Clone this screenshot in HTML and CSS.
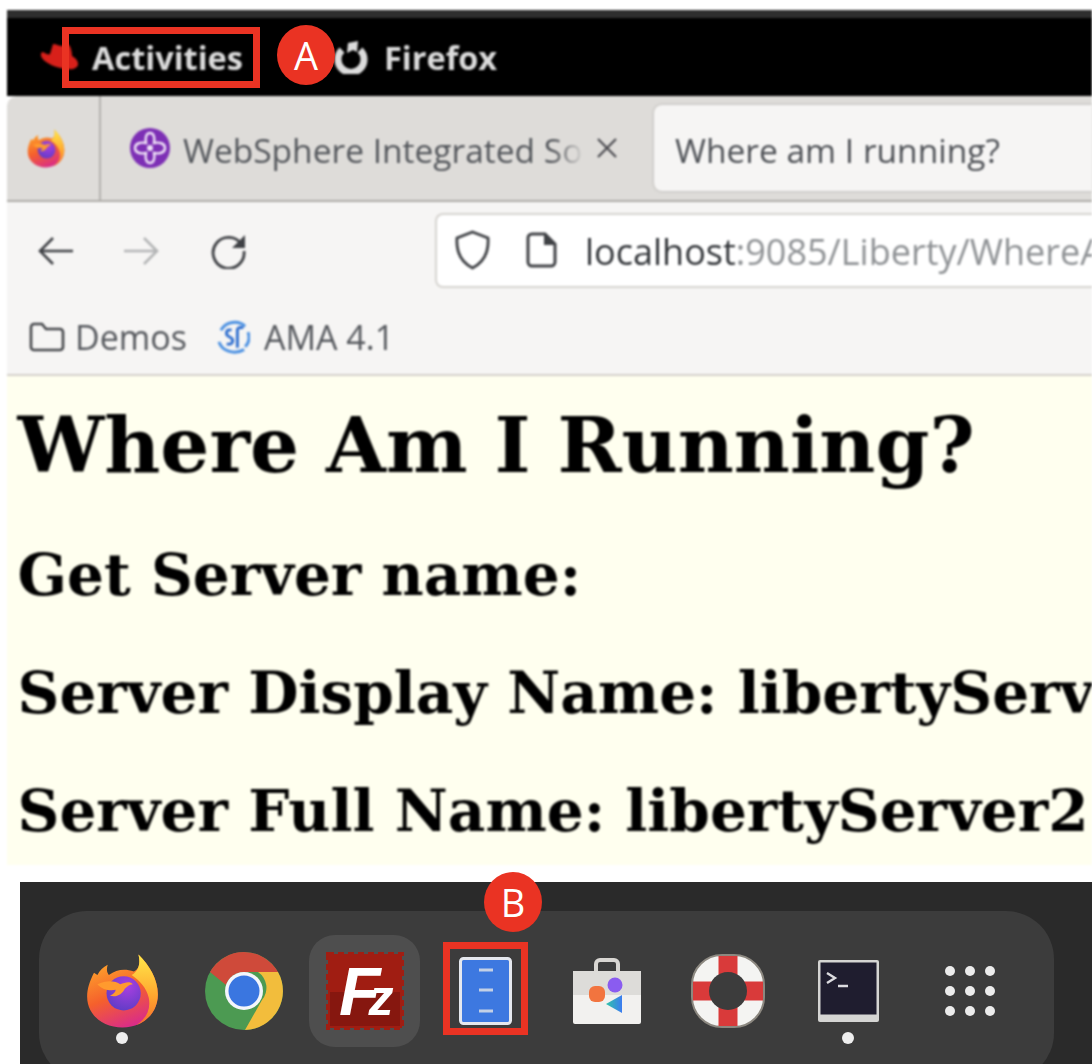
FILE: index.html
```html
<!DOCTYPE html>
<html lang="en">
<head>
    <meta charset="UTF-8">
    <title>Where am I running?</title>
    <link rel="stylesheet" href="styles.css">
</head>
<body>
    <svg class="defs" width="0" height="0">
        <defs>
            <linearGradient id="fx-body" x1="0.2" y1="0" x2="0.6" y2="1">
                <stop offset="0" stop-color="#ffb12b"/>
                <stop offset="0.55" stop-color="#f5602c"/>
                <stop offset="1" stop-color="#d92b8a"/>
            </linearGradient>
            <linearGradient id="fx-flame" x1="0.5" y1="0" x2="0.5" y2="1">
                <stop offset="0" stop-color="#ffe94a"/>
                <stop offset="0.6" stop-color="#ffa42e"/>
                <stop offset="1" stop-color="#f4702c"/>
            </linearGradient>
            <radialGradient id="fx-globe" cx="0.6" cy="0.3" r="0.8">
                <stop offset="0" stop-color="#a93fe0"/>
                <stop offset="1" stop-color="#5a3cc4"/>
            </radialGradient>
            <linearGradient id="store-tri" x1="0" y1="0" x2="1" y2="0">
                <stop offset="0" stop-color="#2fc4a8"/>
                <stop offset="1" stop-color="#3c7cf0"/>
            </linearGradient>
            <symbol id="firefox" viewBox="0 0 64 66">
                <path fill="url(#fx-body)" d="M7 17C3 25 1 31 1 38c0 16 14 27 31 27s31-12 31-29C63 24 57 12 46 1c2 9 0 13-4 15-8-3-15-2-22 3-2-3-2-5-1-9-4 2-7 5-9 9z"/>
                <path fill="url(#fx-flame)" d="M46 1c9 9 17 21 17 35 0 13-8 23-19 27 9-6 13-14 11-24-2-9-8-15-15-20 6-3 8-10 6-18z"/>
                <circle cx="33" cy="35" r="15" fill="url(#fx-globe)"/>
                <path fill="#ff9a2e" d="M10 27c8-4 16-3 20 0 4-1 8-3 11 0-3 0-5 2-7 4-2 5-8 8-13 6 3-1 5-3 5-5-5 1-12 0-16-5z"/>
            </symbol>
        </defs>
    </svg>

    <div class="screen">
        <div class="window">
            <div class="topbar">
                <svg class="hat" viewBox="0 0 38 28">
                    <path fill="#d8201a" d="M13 1c3 0 6 2 9 2 3 0 5-2 7-1 2 2 3 8 3 11 4 2 6 5 6 8 0 4-5 6-11 5C17 25 6 21 2 15c-2-3-1-6 1-6 3 2 6 3 7 2z"/>
                </svg>
                <span class="topbar-label topbar-activities">Activities</span>
                <svg class="app-icon" viewBox="0 0 34 34">
                    <path fill="none" stroke="#dcdcdc" stroke-width="7" d="M8 10a13 13 0 1 0 18 0"/>
                    <path fill="#dcdcdc" d="M14 3l10-2-1 11-4-2-6 3z"/>
                </svg>
                <span class="topbar-label">Firefox</span>
            </div>

            <div class="tabs">
                <div class="tab-pinned">
                    <svg class="tab-firefox"><use href="#firefox"/></svg>
                </div>
                <div class="tab">
                    <svg class="tab-favicon" viewBox="0 0 40 40">
                        <circle cx="20" cy="20" r="20" fill="#7d2fb5"/>
                        <path fill="none" stroke="#efe3f7" stroke-width="2.4" d="M20 5c4 0 5 5 4 10 5-1 11 0 11 5s-6 6-11 5c1 5 0 10-4 10s-5-5-4-10c-5 1-11 0-11-5s6-6 11-5c-1-5 0-10 4-10z"/>
                        <circle cx="20" cy="20" r="3" fill="#efe3f7"/>
                    </svg>
                    <span class="tab-title">WebSphere Integrated So</span>
                    <svg class="tab-close" viewBox="0 0 22 22">
                        <path stroke="#4a4a4f" stroke-width="2.2" d="M2 2l18 18M20 2L2 20"/>
                    </svg>
                </div>
                <div class="tab-active">Where am I running?</div>
            </div>

            <div class="toolbar">
                <svg class="nav-icon" viewBox="0 0 36 32">
                    <path fill="none" stroke="#3f4145" stroke-width="2.6" d="M36 16H3M16 3L3 16l13 13"/>
                </svg>
                <svg class="nav-icon" viewBox="0 0 36 32">
                    <path fill="none" stroke="#b4b5b6" stroke-width="2.6" d="M0 16h33M20 3l13 13-13 13"/>
                </svg>
                <svg class="nav-icon" viewBox="0 0 36 36">
                    <path fill="none" stroke="#3f4145" stroke-width="2.8" d="M31 12a15.500 15.500 0 1 0 2 6"/>
                    <path fill="#3f4145" d="M34 2v13H21z"/>
                </svg>
                <div class="urlbar">
                    <svg class="url-shield" viewBox="0 0 37 40">
                        <path fill="none" stroke="#3f4145" stroke-width="2.8" d="M18.500 2L34 8c1 14-4 24-15.500 30C7 32 2 22 3 8z"/>
                    </svg>
                    <svg class="url-page" viewBox="0 0 31 36">
                        <path fill="none" stroke="#3f4145" stroke-width="3" d="M2 6a4 4 0 0 1 4-4h13l10 10v18a4 4 0 0 1-4 4H6a4 4 0 0 1-4-4z"/>
                        <path fill="#3f4145" d="M18 2l11 11H18z"/>
                    </svg>
                    <span class="url-text"><span class="url-host">localhost</span><span class="url-rest">:9085/Liberty/WhereAmI</span></span>
                </div>
            </div>

            <div class="bookmarks">
                <svg class="bm-folder" viewBox="0 0 36 32">
                    <path fill="none" stroke="#45474b" stroke-width="2.6" d="M2 6a3 3 0 0 1 3-3h8l4 5h14a3 3 0 0 1 3 3v15a3 3 0 0 1-3 3H5a3 3 0 0 1-3-3z"/>
                </svg>
                <span class="bm-label">Demos</span>
                <svg class="bm-favicon" viewBox="0 0 34 38">
                    <path fill="none" stroke="#4a90e2" stroke-width="3" d="M4 12C9 3 22 1 29 8M2 24c3 9 15 14 26 8M32 14c2 6 1 11-3 15"/>
                    <path fill="none" stroke="#2f6fd0" stroke-width="3" d="M15 12c-6-2-7 5-2 7s4 9-3 7M21 10v20M21 10c3-1 5-1 6 0"/>
                </svg>
                <span class="bm-label">AMA 4.1</span>
            </div>

            <div class="content">
                <h1>Where Am I Running?</h1>
                <h2>Get Server name:</h2>
                <h2>Server Display Name: libertyServer2</h2>
                <h2>Server Full Name: libertyServer2</h2>
            </div>
        </div>

        <div class="dock-wrap">
            <div class="dock">
                <div class="dock-item">
                    <svg class="dock-firefox"><use href="#firefox"/></svg>
                    <span class="dock-dot"></span>
                </div>
                <div class="dock-item">
                    <svg class="dock-chrome" viewBox="0 0 78 78">
                        <circle cx="39" cy="39" r="39" fill="#4c9a52"/>
                        <path fill="#cf4a3a" d="M39 0a39 39 0 0 1 34 20H39a19 19 0 0 0-18 13L5 20A39 39 0 0 1 39 0z"/>
                        <path fill="#f2bd3c" d="M73 20a39 39 0 0 1-33 58l17-30a19 19 0 0 0-4-28z"/>
                        <circle cx="39" cy="39" r="19" fill="#f4f6fb"/>
                        <circle cx="39" cy="39" r="15.500" fill="#3a76e0"/>
                    </svg>
                </div>
                <div class="dock-item dock-item-hover">
                    <svg class="dock-fz" viewBox="0 0 78 78">
                        <rect x="2" y="2" width="74" height="74" fill="#a01d12" stroke="#a01d12" stroke-width="4" stroke-dasharray="6 4"/>
                        <rect x="4" y="40" width="70" height="34" fill="#86170f"/>
                        <text class="fz-text" x="13" y="63">F<tspan class="fz-small" dx="-12">z</tspan></text>
                    </svg>
                </div>
                <div class="dock-item">
                    <svg class="dock-files" viewBox="0 0 53 68">
                        <rect x="1.500" y="1.500" width="50" height="65" rx="3" fill="#3d78e0" stroke="#e6e8ee" stroke-width="3"/>
                        <path stroke="#c3d0e6" stroke-width="3" d="M20 13h14M20 33h14M20 54h14"/>
                    </svg>
                </div>
                <div class="dock-item">
                    <svg class="dock-store" viewBox="0 0 68 66">
                        <path fill="none" stroke="#d8d6d2" stroke-width="4" d="M23 14V6a4 4 0 0 1 4-4h14a4 4 0 0 1 4 4v8"/>
                        <rect y="13" width="68" height="53" rx="2" fill="#f2f1ef"/>
                        <rect y="13" width="68" height="24" fill="#dddcd9"/>
                        <circle cx="42" cy="27" r="7.500" fill="#8a5cf0"/>
                        <rect x="16" y="28" width="16" height="16" rx="6" fill="#f2743f"/>
                        <path fill="url(#store-tri)" d="M33 46l16-9v18z"/>
                    </svg>
                </div>
                <div class="dock-item">
                    <svg class="dock-help" viewBox="0 0 74 74">
                        <rect x="1" y="1" width="72" height="72" rx="30" fill="#f4f4f2" stroke="#8c8880" stroke-width="2"/>
                        <path fill="#d93a3a" d="M27.500 2h19v70h-19zM2 27.500h70v19H2z"/>
                        <circle cx="37" cy="37" r="19" fill="#3c3c3c"/>
                    </svg>
                </div>
                <div class="dock-item">
                    <svg class="dock-term" viewBox="0 0 63 64">
                        <rect x="1" y="1" width="61" height="62" rx="2" fill="#d5d5d3"/>
                        <rect x="3.500" y="3.500" width="56" height="52" fill="#1f1d2f"/>
                        <path fill="none" stroke="#dcdce0" stroke-width="2.400" d="M10 14l8 5-8 5M21 27h10"/>
                    </svg>
                    <span class="dock-dot"></span>
                </div>
                <div class="dock-item">
                    <svg class="dock-grid" viewBox="0 0 50 50">
                        <g fill="#ececec">
                            <circle cx="5" cy="5" r="5"/><circle cx="25" cy="5" r="5"/><circle cx="45" cy="5" r="5"/>
                            <circle cx="5" cy="25" r="5"/><circle cx="25" cy="25" r="5"/><circle cx="45" cy="25" r="5"/>
                            <circle cx="5" cy="45" r="5"/><circle cx="25" cy="45" r="5"/><circle cx="45" cy="45" r="5"/>
                        </g>
                    </svg>
                </div>
            </div>
        </div>

        <!-- callouts drawn over the screenshot -->
        <div class="callout-box callout-box-a"></div>
        <div class="callout-dot callout-dot-a">A</div>
        <div class="callout-box callout-box-b"></div>
        <div class="callout-dot callout-dot-b">B</div>
    </div>
</body>
</html>
```

FILE: styles.css
```css
html, body {
    margin: 0;
    padding: 0;
    background: #fff;
}

.defs {
    position: absolute;
}

.screen {
    position: relative;
    width: 1092px;
    height: 1064px;
    overflow: hidden;
    padding-top: 10px;
    box-sizing: border-box;
    font-family: "Open Sans", sans-serif;
}

.window {
    margin-left: 7px;
    filter: blur(0.8px);
}

/* gnome top bar */
.topbar {
    height: 78px;
    background: #000;
    border-top: 8px solid #2e2e2e;
    display: flex;
    align-items: center;
}

.hat {
    width: 38px;
    height: 28px;
    margin-left: 33px;
}

.topbar-label {
    color: #dcdcdc;
    font-size: 32.5px;
    font-weight: 700;
}

.topbar-activities {
    margin-left: 14px;
}

.app-icon {
    width: 34px;
    height: 34px;
    margin-left: 91px;
    margin-right: 16px;
}

/* tab strip */
.tabs {
    height: 106px;
    background: #dedcd9;
    border-bottom: 2px solid #aeaca8;
    border-radius: 10px 0 0 0;
    box-sizing: border-box;
    display: flex;
    align-items: center;
}

.tab-pinned {
    width: 94px;
    height: 100%;
    border-right: 2px solid #b4b2ae;
    display: flex;
    align-items: center;
    padding-left: 20px;
    box-sizing: border-box;
}

.tab-firefox {
    width: 38px;
    height: 39px;
}

.tab {
    width: 553px;
    height: 100%;
    display: flex;
    align-items: center;
    padding-left: 29px;
    padding-right: 36px;
    box-sizing: border-box;
}

.tab-favicon {
    width: 40px;
    height: 40px;
    margin-right: 13px;
    flex: none;
}

.tab-title {
    flex: 1;
    min-width: 0;
    padding-top: 3px;
    white-space: nowrap;
    overflow: hidden;
    color: #54575c;
    font-size: 33.5px;
    -webkit-mask-image: linear-gradient(to right, #000 92%, transparent 100%);
    mask-image: linear-gradient(to right, #000 92%, transparent 100%);
}

.tab-close {
    width: 22px;
    height: 22px;
    flex: none;
    margin-left: 12px;
}

.tab-active {
    flex: 1;
    height: 86px;
    display: flex;
    align-items: center;
    padding: 3px 0 0 21px;
    box-sizing: border-box;
    background: #f6f5f4;
    border-radius: 8px 0 0 8px;
    box-shadow: 0 0 3px #aaa8a4;
    color: #4e5156;
    font-size: 33.5px;
}

/* nav bar */
.toolbar {
    height: 98px;
    background: #f6f5f4;
    display: flex;
    align-items: center;
}

.nav-icon {
    width: 36px;
    height: 36px;
    margin-left: 30px;
    margin-right: 22px;
}

.nav-icon + .nav-icon {
    margin-left: 29px;
}

.urlbar {
    flex: 1;
    height: 75px;
    margin-left: 166px;
    margin-bottom: 2px;
    display: flex;
    align-items: center;
    background: #fff;
    border: 2px solid #d6d4d0;
    border-right: none;
    border-radius: 8px 0 0 8px;
    box-sizing: border-box;
    white-space: nowrap;
    overflow: hidden;
    font-size: 36px;
}

.url-shield {
    width: 37px;
    height: 40px;
    margin-left: 17px;
    flex: none;
}

.url-page {
    width: 31px;
    height: 36px;
    margin-left: 35px;
    margin-right: 28px;
    flex: none;
}

.url-text {
    padding-top: 3px;
}

.url-host {
    color: #33363a;
}

.url-rest {
    color: #8f9295;
}

/* bookmarks */
.bookmarks {
    height: 76px;
    background: #f6f5f4;
    border-bottom: 2px solid #d4d0cb;
    display: flex;
    align-items: center;
    box-sizing: border-box;
    padding-left: 22px;
}

.bm-folder {
    width: 36px;
    height: 32px;
    margin-right: 10px;
}

.bm-favicon {
    width: 33px;
    height: 38px;
    margin-left: 30px;
    margin-right: 14px;
}

.bm-label {
    color: #55585d;
    font-size: 34px;
}

/* page */
.content {
    height: 489px;
    padding: 29px 0 0 10.5px;
    box-sizing: border-box;
    background: #ffffef;
    font-family: "DejaVu Serif", serif;
    white-space: nowrap;
    overflow: hidden;
    color: #000;
}

.content h1 {
    margin: 0 0 58px;
    font-size: 77.2px;
    line-height: 80px;
}

.content h2 {
    margin: 0 0 54px;
    font-size: 58px;
    line-height: 64px;
}

/* dock */
.dock-wrap {
    margin: 17px 0 0 20px;
    height: 182px;
    padding-top: 29px;
    box-sizing: border-box;
    background: #2a2a2a;
}

.dock {
    width: 1015px;
    height: 170px;
    margin-left: 19px;
    padding: 24px 0 0 23px;
    box-sizing: border-box;
    display: flex;
    align-items: flex-start;
    background: #3c3c3c;
    border-radius: 48px;
    filter: blur(0.6px);
}

.dock-item {
    position: relative;
    width: 121px;
    height: 112px;
    flex: none;
    display: flex;
    align-items: center;
    justify-content: center;
    border-radius: 26px;
}

.dock-item-hover {
    width: 111px;
    margin: 0 5px;
    background: #4e4e4e;
}

.dock-dot {
    position: absolute;
    left: 54px;
    top: 97px;
    width: 12px;
    height: 12px;
    border-radius: 50%;
    background: #eee;
}

.dock-firefox {
    width: 73px;
    height: 76px;
}

.dock-chrome {
    width: 78px;
    height: 78px;
}

.dock-fz {
    width: 78px;
    height: 78px;
}

.fz-text {
    fill: #fff;
    font-family: "Liberation Sans", sans-serif;
    font-style: italic;
    font-weight: 700;
    font-size: 68px;
}

.fz-small {
    font-size: 50px;
}

.dock-files {
    width: 53px;
    height: 68px;
}

.dock-store {
    width: 68px;
    height: 66px;
}

.dock-help {
    width: 74px;
    height: 74px;
}

.dock-term {
    width: 63px;
    height: 64px;
}

.dock-grid {
    width: 50px;
    height: 50px;
}

/* callouts */
.callout-box {
    position: absolute;
    border: 7px solid #ea3323;
    box-sizing: border-box;
}

.callout-box-a {
    left: 62px;
    top: 27px;
    width: 198px;
    height: 61px;
}

.callout-box-b {
    left: 443px;
    top: 942px;
    width: 85px;
    height: 93px;
}

.callout-dot {
    position: absolute;
    width: 58px;
    height: 60px;
    display: flex;
    align-items: center;
    justify-content: center;
    border-radius: 50%;
    background: #ea3323;
    color: #fff;
    font-family: "Open Sans", sans-serif;
    font-size: 38px;
}

.callout-dot-a {
    left: 277px;
    top: 25px;
}

.callout-dot-b {
    left: 484px;
    top: 872px;
}
```
